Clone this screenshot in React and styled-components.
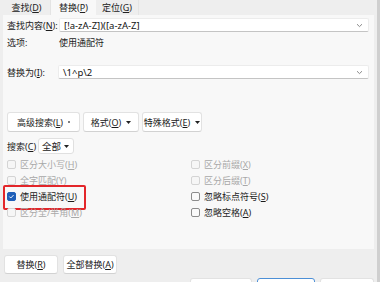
import React from 'react';
import styled, { createGlobalStyle } from 'styled-components';

const GlobalStyle = createGlobalStyle`
   html, body {
      margin: 0;
      padding: 0;
      background: #eeeeee;
   }
   * { box-sizing: border-box; }
`;

const Window = styled.div`
   width: 380px;
   height: 282px;
   overflow: hidden;
   background: #eeeeee;
   font-family: "Noto Sans", "Noto Sans CJK SC", sans-serif;
   font-size: 9px;
   color: #1b1b1b;
   display: flex;
   flex-direction: column;
`;

const TabBar = styled.div`
   height: 15px;
   display: flex;
   padding-left: 3px;
`;

const Tab = styled.div`
   width: ${(p) => p.w}px;
   height: 15px;
   display: flex;
   align-items: center;
   justify-content: center;
   background: ${(p) => (p.active ? '#f8f8f8' : 'transparent')};
   border-right: ${(p) => (p.active ? 'none' : '1px solid #e4e4e4')};
   color: #222;
`;

const Middle = styled.div`
   display: flex;
   height: 234px;
`;

const Panel = styled.div`
   margin-left: 3px;
   width: 371px;
   background: #f8f8f8;
   padding: 3px 5px 0 4px;
   display: flex;
   flex-direction: column;
`;

const EdgeStrip = styled.div`
   margin-left: 3px;
   width: 3px;
   background: #cfcfcf;
   margin-top: -15px;
   height: 300px;
`;

const FieldRow = styled.div`
   display: flex;
   align-items: center;
   height: 14px;
   margin-top: ${(p) => p.mt || 0}px;
`;

const Label = styled.div`
   width: ${(p) => p.w}px;
   flex-shrink: 0;
   white-space: nowrap;
`;

const Input = styled.div`
   flex: 1;
   height: 14px;
   background: #ffffff;
   border: 1px solid #ececec;
   border-bottom: 1px solid #c4c4c4;
   border-radius: 2px;
   display: flex;
   align-items: center;
   justify-content: space-between;
   padding: 0 5px 0 4px;
   font-size: 9.5px;
   color: #111;
`;

const Chevron = () => (
   <svg width="7" height="5" viewBox="0 0 7 5">
      <path d="M1 1.2 L3.5 3.6 L6 1.2" fill="none" stroke="#8a8a8a" strokeWidth="1" />
   </svg>
);

const OptionRow = styled.div`
   display: flex;
   align-items: center;
   height: 12px;
   margin-top: 4px;
`;

const ButtonRow = styled.div`
   display: flex;
   gap: 3px;
   margin-top: 33px;
   height: 20px;
`;

const Btn = styled.div`
   width: ${(p) => p.w}px;
   height: ${(p) => p.h || 20}px;
   flex-shrink: 0;
   background: #ffffff;
   border: 1px solid ${(p) => (p.focus ? '#4c8fd6' : '#e2e2e2')};
   border-bottom-color: ${(p) => (p.focus ? '#4c8fd6' : '#d2d2d2')};
   border-radius: 3px;
   display: flex;
   align-items: center;
   justify-content: center;
   gap: 5px;
   white-space: nowrap;
   color: #1b1b1b;
`;

const Caret = () => (
   <svg width="5" height="3" viewBox="0 0 5 3">
      <path d="M0 0 L5 0 L2.5 3 Z" fill="#222" />
   </svg>
);

const Dot = styled.span`
   width: 2px;
   height: 2px;
   background: #555;
   border-radius: 1px;
   display: inline-block;
`;

const SearchRow = styled.div`
   display: flex;
   align-items: center;
   margin-top: 6px;
   height: 16px;
   gap: 2px;
`;

const Select = styled.div`
   width: 36px;
   height: 16px;
   background: #ffffff;
   border: 1px solid #e0e0e0;
   border-radius: 3px;
   display: flex;
   align-items: center;
   justify-content: space-between;
   padding: 0 4px 0 3px;
   font-size: 9.5px;
`;

const CheckGrid = styled.div`
   display: grid;
   grid-template-columns: 184px 1fr;
   grid-auto-rows: 16px;
   margin-top: 2px;
`;

const CheckItem = styled.div`
   position: relative;
   display: flex;
   align-items: center;
   gap: 4px;
   color: ${(p) => (p.disabled ? '#a8a8a8' : '#1b1b1b')};
   white-space: nowrap;

   &::after {
      content: '';
      display: ${(p) => (p.marked ? 'block' : 'none')};
      position: absolute;
      left: -4px;
      top: -3px;
      width: 79px;
      height: 21px;
      border: 2px solid #e3262a;
      border-radius: 2px;
   }
`;

const Box = styled.span`
   width: 9px;
   height: 9px;
   flex-shrink: 0;
   border-radius: 2px;
   border: 1px solid ${(p) => (p.checked ? '#1f5fb8' : p.disabled ? '#d4d4d4' : '#8c8c8c')};
   background: ${(p) => (p.checked ? '#1f5fb8' : p.disabled ? '#f6f6f6' : '#fafafa')};
   display: flex;
   align-items: center;
   justify-content: center;
`;

const Check = () => (
   <svg width="7" height="7" viewBox="0 0 7 7">
      <path d="M1.4 3.6 L2.8 5 L5.6 2" fill="none" stroke="#fff" strokeWidth="0.9" />
   </svg>
);

const Footer = styled.div`
   padding: 6px 0 0 4px;
   display: flex;
   flex-direction: column;
`;

const FooterRow = styled.div`
   display: flex;
   gap: 5px;
`;

const LowerRow = styled.div`
   display: flex;
   gap: 5px;
   margin-top: 4px;
   padding-left: 186px;
`;

const checks = [
   [{ t: '区分大小写', k: 'H', d: true }, { t: '区分前缀', k: 'X', d: true }],
   [{ t: '全字匹配', k: 'Y', d: true }, { t: '区分后缀', k: 'T', d: true }],
   [{ t: '使用通配符', k: 'U', c: true, m: true }, { t: '忽略标点符号', k: 'S' }],
   [{ t: '区分全/半角', k: 'M', d: true }, { t: '忽略空格', k: 'A' }],
];

const Key = ({ text, k }) => (
   <span>{text}(<u>{k}</u>)</span>
);

const CheckBox = ({ item }) => (
   <CheckItem disabled={item.d} marked={item.m}>
      <Box checked={item.c} disabled={item.d}>{item.c && <Check />}</Box>
      <Key text={item.t} k={item.k} />
   </CheckItem>
);

export default function App() {
   return (
      <>
         <GlobalStyle />
         <Window>
            <TabBar>
               <Tab w={48}><Key text="查找" k="D" /></Tab>
               <Tab w={45} active><Key text="替换" k="P" /></Tab>
               <Tab w={43}><Key text="定位" k="G" /></Tab>
            </TabBar>
            <Middle>
               <Panel>
                  <FieldRow>
                     <Label w={52}>查找内容(<u>N</u>):</Label>
                     <Input>
                        <span>[!a-zA-Z])([a-zA-Z]</span>
                        <Chevron />
                     </Input>
                  </FieldRow>
                  <OptionRow>
                     <Label w={52}>选项:</Label>
                     <span>使用通配符</span>
                  </OptionRow>
                  <FieldRow mt={17}>
                     <Label w={51}>替换为(<u>I</u>):</Label>
                     <Input>
                        <span>\1^p\2</span>
                        <Chevron />
                     </Input>
                  </FieldRow>
                  <ButtonRow>
                     <Btn w={73}><Key text="高级搜索" k="L" /><Dot /></Btn>
                     <Btn w={56}><Key text="格式" k="O" /><Caret /></Btn>
                     <Btn w={60}><Key text="特殊格式" k="E" /><Caret /></Btn>
                  </ButtonRow>
                  <SearchRow>
                     <Label w={29}>搜索(<u>C</u>)</Label>
                     <Select>
                        <span>全部</span>
                        <Caret />
                     </Select>
                  </SearchRow>
                  <CheckGrid>
                     {checks.map((row, i) => (
                        <React.Fragment key={i}>
                           <CheckBox item={row[0]} />
                           <CheckBox item={row[1]} />
                        </React.Fragment>
                     ))}
                  </CheckGrid>
               </Panel>
               <EdgeStrip />
            </Middle>
            <Footer>
               <FooterRow>
                  <Btn w={54} h={19}><Key text="替换" k="R" /></Btn>
                  <Btn w={54} h={19}><Key text="全部替换" k="A" /></Btn>
               </FooterRow>
               <LowerRow>
                  <Btn w={62} h={19} />
                  <Btn w={58} h={19} focus />
                  <Btn w={54} h={19} />
               </LowerRow>
            </Footer>
         </Window>
      </>
   );
}
